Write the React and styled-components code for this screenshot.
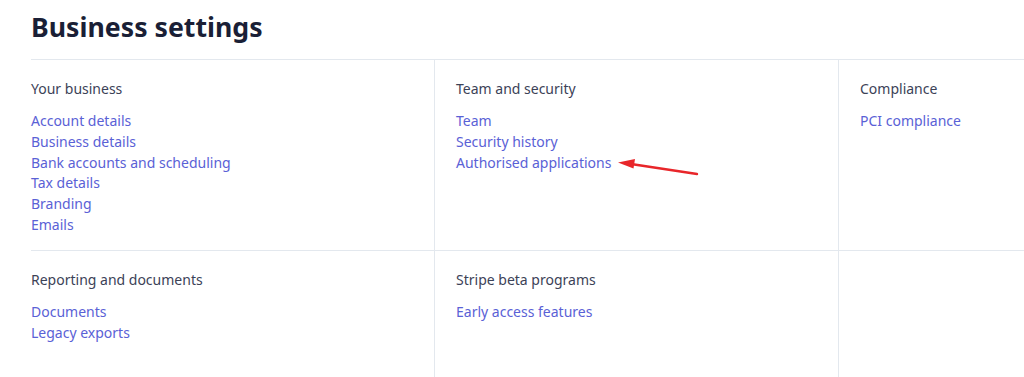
import React from "react";
import styled, { createGlobalStyle } from "styled-components";

const GlobalStyle = createGlobalStyle`
  html, body {
    margin: 0;
    padding: 0;
    background: #ffffff;
  }
  body {
    font-family: "Noto Sans", "Open Sans", sans-serif;
  }
`;

const sections = [
  {
    title: "Your business",
    links: [
      "Account details",
      "Business details",
      "Bank accounts and scheduling",
      "Tax details",
      "Branding",
      "Emails",
    ],
  },
  {
    title: "Team and security",
    links: ["Team", "Security history", "Authorised applications"],
  },
  { title: "Compliance", links: ["PCI compliance"] },
  { title: "Reporting and documents", links: ["Documents", "Legacy exports"] },
  { title: "Stripe beta programs", links: ["Early access features"] },
  { title: "", links: [] },
];

const Settings = () => {
  return (
    <Page>
      <GlobalStyle />
      <Title>Business settings</Title>
      <Grid>
        {sections.map((s, i) => (
          <Cell key={i} $first={i % 3 === 0} $top={i < 3}>
            {s.title && <Heading>{s.title}</Heading>}
            <LinkList>
              {s.links.map((l) => (
                <Link key={l} href="#">
                  {l}
                </Link>
              ))}
            </LinkList>
          </Cell>
        ))}
      </Grid>
      {/* red annotation arrow drawn over the screenshot */}
      <Arrow width="82" height="22" viewBox="0 0 82 22">
        <path d="M80 16 L14 6" stroke="#e8262a" strokeWidth="2.4" strokeLinecap="round" fill="none" />
        <path d="M1 4.5 L18 1 L16.5 10.5 Z" fill="#e8262a" />
      </Arrow>
    </Page>
  );
};

const Page = styled.div`
  position: relative;
  padding-left: 31px;
  height: 377px;
  overflow: hidden;
`;

const Title = styled.h1`
  margin: 0;
  padding-top: 13px;
  height: 60px;
  box-sizing: border-box;
  font-size: 26.7px;
  line-height: 27px;
  font-weight: 700;
  color: #1a1f36;
  border-bottom: 1px solid #e3e8ee;
`;

const Grid = styled.div`
  display: grid;
  grid-template-columns: 403px 404px 1fr;
`;

const Cell = styled.div`
  box-sizing: border-box;
  padding: 19px 0 0 ${(p) => (p.$first ? "0" : "21px")};
  border-left: ${(p) => (p.$first ? "none" : "1px solid #e3e8ee")};
  border-bottom: ${(p) => (p.$top ? "1px solid #e3e8ee" : "none")};
  height: ${(p) => (p.$top ? "191px" : "127px")};
`;

const Heading = styled.div`
  font-size: 14px;
  line-height: 20px;
  color: #3c4257;
  font-weight: 400;
  margin-bottom: 12px;
`;

const LinkList = styled.div`
  display: flex;
  flex-direction: column;
`;

const Link = styled.a`
  font-size: 14px;
  line-height: 20.8px;
  color: #5a61d6;
  text-decoration: none;
`;

const Arrow = styled.svg`
  position: absolute;
  left: 617px;
  top: 158px;
`;

export default Settings;
